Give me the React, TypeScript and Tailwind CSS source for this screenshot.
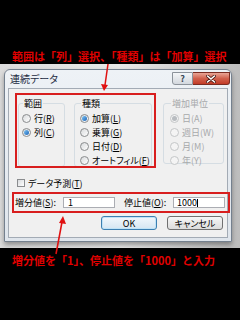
import React from "react"

const jp = "font-['Noto_Sans_CJK_JP','Noto_Sans',sans-serif]"

function Radio({ checked, disabled }: { checked?: boolean; disabled?: boolean }) {
  return (
    <span
      className={`flex w-[9px] h-[9px] shrink-0 items-center justify-center rounded-full border ${
        disabled ? "border-[#c4c6c8] bg-[#f4f4f4]" : "border-[#8a8c8e] bg-gradient-to-br from-[#d8dadc] to-[#ffffff]"
      }`}
    >
      {checked && (
        <span
          className={`w-[5px] h-[5px] rounded-full ${
            disabled ? "bg-[#b8bcc0]" : "bg-gradient-to-br from-[#7ec4f2] to-[#1b64b8]"
          }`}
        />
      )}
    </span>
  )
}

function Option({
  label,
  keyChar,
  checked,
  disabled,
}: {
  label: string
  keyChar: string
  checked?: boolean
  disabled?: boolean
}) {
  return (
    <div className="flex h-[14px] items-center gap-[3px]">
      <Radio checked={checked} disabled={disabled} />
      <span className={`text-[9px] leading-[11px] ${disabled ? "text-[#a7a9ab]" : "text-black"}`}>
        {label}(<span className={disabled ? "" : "underline"}>{keyChar}</span>)
      </span>
    </div>
  )
}

function Group({
  title,
  className,
  disabled,
  children,
}: {
  title: string
  className: string
  disabled?: boolean
  children: React.ReactNode
}) {
  return (
    <div className={`rounded-[3px] border border-[#d5dde3] ${className}`}>
      <span
        className={`-mt-[6px] ml-[1px] block w-fit bg-[#f0f0f0] px-[1px] text-[9px] leading-[11px] ${
          disabled ? "text-[#a7a9ab]" : "text-black"
        }`}
      >
        {title}
      </span>
      <div className="mt-[2px] flex flex-col">{children}</div>
    </div>
  )
}

export default function App() {
  return (
    <div className={`relative w-[240px] h-[320px] overflow-hidden bg-black ${jp} [font-feature-settings:'palt']`}>
      {/* top caption */}
      <div className="flex h-[64px] items-end pb-[1px] pl-[12px]">
        <p className="text-[11px] font-bold leading-[13px] text-[#e00000] [font-feature-settings:normal]">
          範囲は「列」選択、「種類」は「加算」選択
        </p>
      </div>

      {/* screenshot */}
      <div className="h-[184px] bg-gradient-to-r from-[#dcdcdc] via-[#e8e8e8] to-[#bdbdbd] pl-[4px] pt-[5px]">
        <div className="flex h-[173px] w-[228px] flex-col rounded-t-[6px] border border-[#74808e] bg-gradient-to-b from-[#eef2f6] to-[#dfe5ec] shadow-[0_3px_5px_rgba(0,0,0,0.35)]">
          {/* title bar */}
          <div className="flex h-[18px] justify-between">
            <span className="pl-[5px] pt-[3px] text-[10px] leading-[12px] text-[#1b2a40]">連続データ</span>
            <div className="flex pr-[1px] pt-[2px]">
              <div className="flex h-[13px] w-[21px] items-center justify-center rounded-bl-[3px] border border-[#8c939b] bg-gradient-to-b from-[#f4f6f8] to-[#d3d8de] text-[9px] font-bold leading-[9px] text-[#3a4656]">
                ?
              </div>
              <div className="flex h-[13px] w-[37px] items-center justify-center rounded-br-[3px] border border-l-0 border-[#7a2c22] bg-gradient-to-b from-[#e8a596] via-[#d0604c] to-[#c23a26]">
                <svg width="10" height="8" viewBox="0 0 10 8">
                  <path d="M1.5 1 L8.5 7 M8.5 1 L1.5 7" stroke="#4a1a14" strokeWidth="3" strokeLinecap="round" />
                  <path d="M1.5 1 L8.5 7 M8.5 1 L1.5 7" stroke="#ffffff" strokeWidth="1.6" strokeLinecap="round" />
                </svg>
              </div>
            </div>
          </div>

          {/* client area */}
          <div className="mx-[3px] flex h-[150px] flex-col border border-[#a3abb5] bg-[#f0f0f0]">
            <div className="flex pl-[9px] pt-[14px]">
              <Group title="範囲" className="h-[64px] w-[47px] pl-[3px]">
                <Option label="行" keyChar="R" />
                <Option label="列" keyChar="C" checked />
              </Group>
              <Group title="種類" className="ml-[9px] h-[64px] w-[78px] pl-[5px]">
                <Option label="加算" keyChar="L" checked />
                <Option label="乗算" keyChar="G" />
                <Option label="日付" keyChar="D" />
                <Option label="オートフィル" keyChar="F" />
              </Group>
              <Group title="増加単位" disabled className="ml-[11px] h-[61px] w-[61px] pl-[6px]">
                <Option label="日" keyChar="A" checked disabled />
                <Option label="週日" keyChar="W" disabled />
                <Option label="月" keyChar="M" disabled />
                <Option label="年" keyChar="Y" disabled />
              </Group>
            </div>

            <div className="mt-[11px] flex h-[10px] items-center gap-[3px] pl-[8px]">
              <span className="h-[8px] w-[8px] border border-[#8a8c8e] bg-gradient-to-br from-[#d8dadc] to-[#ffffff]" />
              <span className="text-[9px] leading-[11px] text-black">
                データ予測(<span className="underline">T</span>)
              </span>
            </div>

            <div className="mt-[9px] flex h-[11px] items-center pl-[6px]">
              <span className="w-[48px] text-[9px] leading-[11px] text-black">
                増分値(<span className="underline">S</span>):
              </span>
              <div className="flex h-[11px] w-[52px] items-center border border-[#abadb3] bg-white pl-[4px] text-[9px] leading-[9px] text-black">
                1
              </div>
              <span className="ml-[9px] w-[49px] text-[9px] leading-[11px] text-black">
                停止値(<span className="underline">O</span>):
              </span>
              <div className="flex h-[11px] w-[52px] items-center border border-[#abadb3] bg-white pl-[3px] text-[9px] leading-[9px] text-black">
                1000<span className="ml-[0.5px] h-[8px] w-[1px] bg-black" />
              </div>
            </div>

            <div className="mt-[8px] flex justify-end gap-[10px] pr-[4px]">
              <div className="flex h-[14px] w-[56px] items-center justify-center rounded-[3px] border border-[#3c7fb1] bg-gradient-to-b from-[#f2f8fc] to-[#d5e6f2] text-[9px] leading-[11px] text-black shadow-[inset_0_0_0_1px_#bfe3f7]">
                OK
              </div>
              <div className="flex h-[14px] w-[56px] items-center justify-center rounded-[3px] border border-[#707070] bg-gradient-to-b from-[#f6f6f6] to-[#dcdcdc] text-[9px] leading-[11px] text-black">
                キャンセル
              </div>
            </div>
          </div>
        </div>
      </div>

      {/* bottom caption */}
      <div className="pl-[12px] pt-[6px]">
        <p className="text-[11px] font-bold leading-[13px] text-[#e00000] [font-feature-settings:normal]">
          増分値を「1」、停止値を「1000」と入力
        </p>
      </div>

      {/* annotation boxes */}
      <div className="absolute left-[15px] top-[93px] h-[75px] w-[141px] border-2 border-[#d81e1e]" />
      <div className="absolute left-[12px] top-[192px] h-[21px] w-[218px] border-2 border-[#d81e1e]" />

      {/* arrows */}
      <svg className="pointer-events-none absolute left-0 top-0" width="240" height="320" viewBox="0 0 240 320">
        <line x1="108" y1="64" x2="105" y2="85" stroke="#e01010" strokeWidth="1.5" />
        <polygon points="101,84 108,85 104,91" fill="#e01010" />
        <line x1="56" y1="254" x2="62" y2="222" stroke="#e01010" strokeWidth="1.5" />
        <polygon points="59,223 66,224 63,216" fill="#e01010" />
      </svg>
    </div>
  )
}
